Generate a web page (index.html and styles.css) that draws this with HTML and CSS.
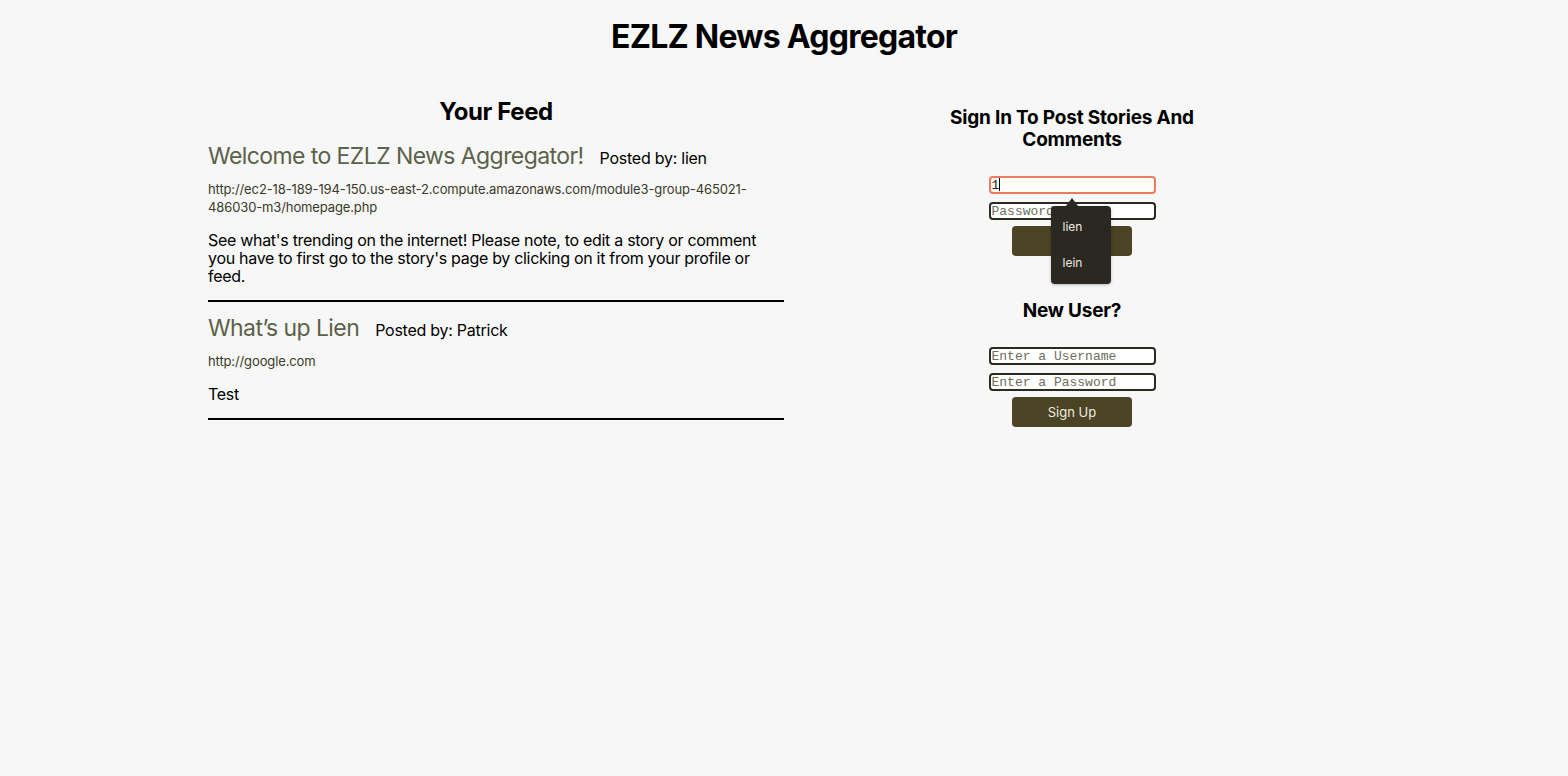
FILE: index.html
```html
<!DOCTYPE html>
<html lang="en">
<head>
<meta charset="utf-8">
<title>EZLZ News Aggregator</title>
<link rel="stylesheet" href="styles.css">
</head>
<body>
<h1 class="site-title">EZLZ News Aggregator</h1>
<main class="layout">
  <section class="feed">
    <h2 class="feed-title">Your Feed</h2>
    <article class="story">
      <div class="story-head">
        <a class="story-title" href="#">Welcome to EZLZ News Aggregator!</a>
        <span class="story-author">Posted by: lien</span>
      </div>
      <div class="story-link">http://ec2-18-189-194-150.us-east-2.compute.amazonaws.com/module3-group-465021-486030-m3/homepage.php</div>
      <p class="story-body">See what's trending on the internet! Please note, to edit a story or comment you have to first go to the story's page by clicking on it from your profile or feed.</p>
    </article>
    <article class="story">
      <div class="story-head">
        <a class="story-title" href="#">What’s up Lien</a>
        <span class="story-author">Posted by: Patrick</span>
      </div>
      <div class="story-link">http://google.com</div>
      <p class="story-body">Test</p>
    </article>
  </section>
  <aside class="side">
    <h3 class="side-title">Sign In To Post Stories And Comments</h3>
    <form class="auth-form">
      <div class="field-wrap">
        <div class="field field-focus">1<span class="caret"></span></div>
        <div class="autocomplete">
          <div class="ac-item">lien</div>
          <div class="ac-item">lein</div>
        </div>
      </div>
      <input class="field" type="password" placeholder="Password">
      <button class="btn" type="button">Log In</button>
    </form>
    <h3 class="side-title new-user">New User?</h3>
    <form class="auth-form">
      <input class="field" type="text" placeholder="Enter a Username">
      <input class="field" type="password" placeholder="Enter a Password">
      <button class="btn" type="button">Sign Up</button>
    </form>
  </aside>
</main>
</body>
</html>
```

FILE: styles.css
```css
* { box-sizing: border-box; }
html, body { margin: 0; padding: 0; }
body {
  background: #f6f7f6;
  font-family: Inter, "Liberation Sans", sans-serif;
  color: #000;
  width: 1568px;
  height: 776px;
}
.site-title {
  margin: 0;
  padding-top: 18px;
  font-size: 32px;
  line-height: 38px;
  font-weight: 700;
  letter-spacing: -0.75px;
  text-align: center;
}
.layout {
  display: grid;
  grid-template-columns: 576px 576px;
  justify-content: center;
  margin-top: 41px;
}
.feed-title {
  margin: 0;
  font-size: 24px;
  line-height: 30px;
  font-weight: 700;
  letter-spacing: -0.4px;
  text-align: center;
}
.story {
  border-bottom: 2px solid #000;
  padding-bottom: 15px;
}
.story-head {
  display: flex;
  align-items: baseline;
  gap: 16px;
  margin-top: 14px;
}
.story + .story .story-head { margin-top: 11px; }
.story-title {
  font-size: 23px;
  line-height: 30px;
  color: #5c6149;
  text-decoration: none;
  letter-spacing: -0.58px;
}
.story-author {
  font-size: 16px;
  line-height: 20px;
  letter-spacing: -0.25px;
}
.story-link {
  margin-top: 9px;
  font-size: 13px;
  line-height: 18px;
  letter-spacing: -0.12px;
  color: #3b3a2a;
}
.story-body {
  margin: 15px 0 0;
  font-size: 16px;
  line-height: 18px;
  letter-spacing: -0.3px;
}
.side {
  padding-top: 10px;
  display: flex;
  flex-direction: column;
  align-items: center;
}
.side-title {
  margin: 0;
  width: 250px;
  font-size: 19px;
  line-height: 22px;
  font-weight: 700;
  letter-spacing: -0.2px;
  text-align: center;
}
.auth-form {
  display: flex;
  flex-direction: column;
  align-items: center;
  margin-top: 25px;
}
.new-user { margin-top: 44px; }
.field-wrap { position: relative; }
.field {
  display: block;
  width: 167px;
  height: 18px;
  margin: 0 0 8px;
  padding: 0 0 0 1px;
  border: 2px solid #2a2a22;
  border-radius: 4px;
  background: #fff;
  font-family: "Liberation Mono", monospace;
  font-size: 13px;
  line-height: 14px;
  color: #222;
}
.field::placeholder { color: #6e6d5c; }
.field-focus {
  border-color: #ec7a62;
  background: #fffdf6;
}
.caret {
  display: inline-block;
  width: 1px;
  height: 13px;
  background: #000;
  vertical-align: -2px;
}
.btn {
  width: 120px;
  height: 30px;
  margin-top: -2px;
  border: none;
  border-radius: 4px;
  background: #4a4424;
  color: #efece0;
  font-family: Inter, "Liberation Sans", sans-serif;
  font-size: 13px;
}
.autocomplete {
  position: absolute;
  left: 62px;
  top: 30px;
  width: 60px;
  height: 78px;
  background: #2a2820;
  border-radius: 4px;
  padding: 9px 0 0 12px;
  color: #ecebe4;
  font-size: 12px;
  line-height: 24px;
  z-index: 2;
  box-shadow: 0 1px 3px rgba(0,0,0,0.25);
}
.autocomplete::before {
  content: "";
  position: absolute;
  top: -8px;
  left: 15px;
  border-left: 6px solid transparent;
  border-right: 6px solid transparent;
  border-bottom: 8px solid #2a2820;
}
.ac-item + .ac-item { margin-top: 12px; }
```
